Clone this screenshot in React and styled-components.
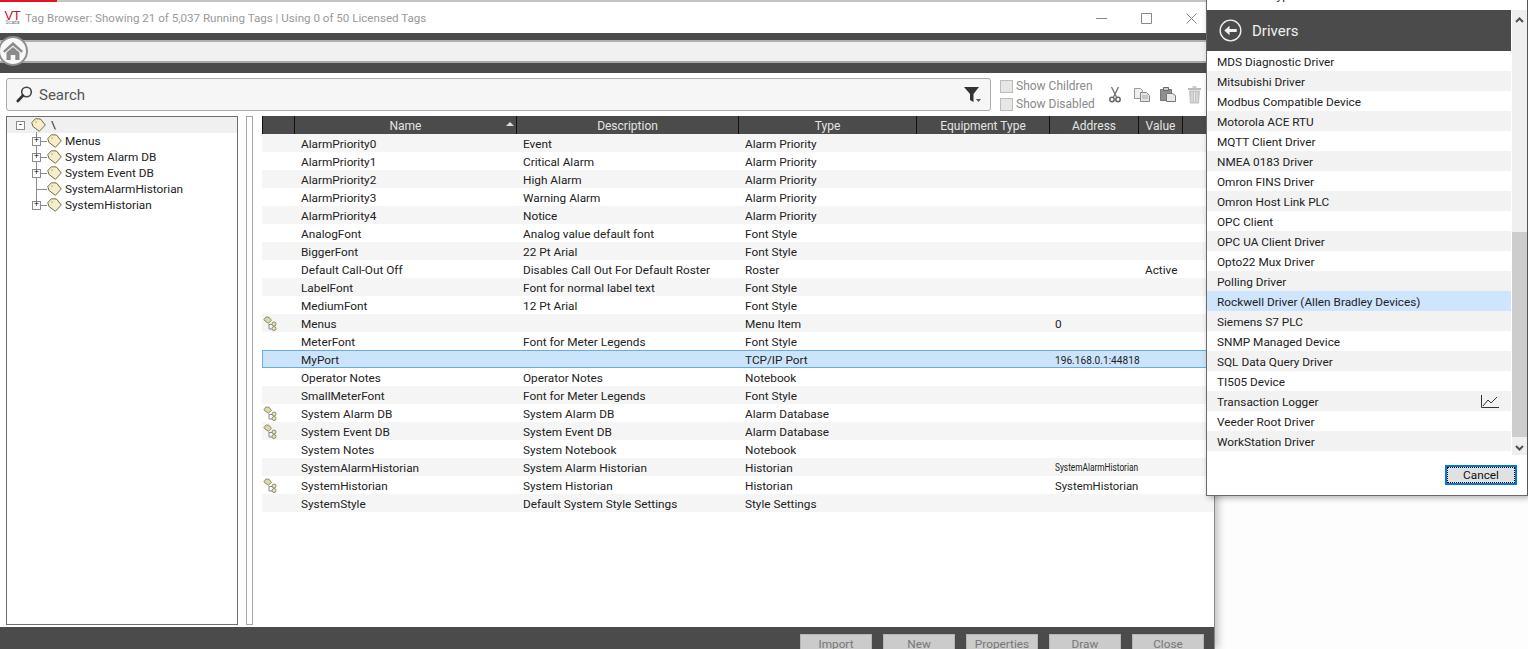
import styled, { createGlobalStyle } from 'styled-components';

const FONT = `Roboto, "Open Sans", "Liberation Sans", sans-serif`;

const tagRows = [
  { name: 'AlarmPriority0', desc: 'Event', type: 'Alarm Priority' },
  { name: 'AlarmPriority1', desc: 'Critical Alarm', type: 'Alarm Priority' },
  { name: 'AlarmPriority2', desc: 'High Alarm', type: 'Alarm Priority' },
  { name: 'AlarmPriority3', desc: 'Warning Alarm', type: 'Alarm Priority' },
  { name: 'AlarmPriority4', desc: 'Notice', type: 'Alarm Priority' },
  { name: 'AnalogFont', desc: 'Analog value default font', type: 'Font Style' },
  { name: 'BiggerFont', desc: '22 Pt Arial', type: 'Font Style' },
  { name: 'Default Call-Out Off', desc: 'Disables Call Out For Default Roster', type: 'Roster', value: 'Active' },
  { name: 'LabelFont', desc: 'Font for normal label text', type: 'Font Style' },
  { name: 'MediumFont', desc: '12 Pt Arial', type: 'Font Style' },
  { name: 'Menus', desc: '', type: 'Menu Item', address: '0', parent: true },
  { name: 'MeterFont', desc: 'Font for Meter Legends', type: 'Font Style' },
  { name: 'MyPort', desc: '', type: 'TCP/IP Port', address: '196.168.0.1:44818', fit: 0.86, selected: true },
  { name: 'Operator Notes', desc: 'Operator Notes', type: 'Notebook' },
  { name: 'SmallMeterFont', desc: 'Font for Meter Legends', type: 'Font Style' },
  { name: 'System Alarm DB', desc: 'System Alarm DB', type: 'Alarm Database', parent: true },
  { name: 'System Event DB', desc: 'System Event DB', type: 'Alarm Database', parent: true },
  { name: 'System Notes', desc: 'System Notebook', type: 'Notebook' },
  { name: 'SystemAlarmHistorian', desc: 'System Alarm Historian', type: 'Historian', address: 'SystemAlarmHistorian', fit: 0.79, small: true },
  { name: 'SystemHistorian', desc: 'System Historian', type: 'Historian', address: 'SystemHistorian', fit: 0.96, parent: true },
  { name: 'SystemStyle', desc: 'Default System Style Settings', type: 'Style Settings' },
];

const treeRows = [
  { label: 'Menus', box: true },
  { label: 'System Alarm DB', box: true },
  { label: 'System Event DB', box: true },
  { label: 'SystemAlarmHistorian', box: false },
  { label: 'SystemHistorian', box: true },
];

const drivers = [
  'MDS Diagnostic Driver',
  'Mitsubishi Driver',
  'Modbus Compatible Device',
  'Motorola ACE RTU',
  'MQTT Client Driver',
  'NMEA 0183 Driver',
  'Omron FINS Driver',
  'Omron Host Link PLC',
  'OPC Client',
  'OPC UA Client Driver',
  'Opto22 Mux Driver',
  'Polling Driver',
  'Rockwell Driver (Allen Bradley Devices)',
  'Siemens S7 PLC',
  'SNMP Managed Device',
  'SQL Data Query Driver',
  'TI505 Device',
  'Transaction Logger',
  'Veeder Root Driver',
  'WorkStation Driver',
];

const GlobalStyle = createGlobalStyle`
  html, body {
    margin: 0;
    padding: 0;
    height: 100%;
    overflow: hidden;
    background: #ffffff;
  }
  * { box-sizing: border-box; }
`;

const Page = styled.div`
  position: relative;
  width: 1528px;
  height: 649px;
  overflow: hidden;
  font-family: ${FONT};
  font-size: 11.8px;
  color: #222;
  background: #fdfdfd;
`;

const Window = styled.div`
  display: flex;
  flex-direction: column;
  width: 1215px;
  height: 649px;
  background: #fff;
  border-right: 1px solid #8a8a8a;
  box-shadow: 3px 0 8px rgba(0, 0, 0, 0.25);
`;

const TopStrip = styled.div`
  height: 3px;
  background: linear-gradient(to right, #e81123 57px, #c4c4c4 57px);
  border-bottom: 1px solid #fff;
`;

const TitleBar = styled.div`
  display: flex;
  align-items: center;
  height: 30px;
  padding-left: 4px;
`;

const Logo = styled.div`
  display: flex;
  flex-direction: column;
  align-items: center;
  width: 17px;
  line-height: 1;
  margin-right: 4px;
`;

const LogoMark = styled.span`
  color: #c8102e;
  font: 13px/9px "Liberation Sans", sans-serif;
  letter-spacing: -0.3px;
`;

const LogoSub = styled.span`
  color: #777;
  font-size: 5px;
  line-height: 5px;
`;

const TitleText = styled.div`
  flex: 1;
  color: #9a9a9a;
  font-size: 11.6px;
`;

const WinButton = styled.div`
  display: flex;
  align-items: center;
  justify-content: center;
  width: 45px;
  height: 30px;
`;

const HomeBand = styled.div`
  position: relative;
  height: 40px;
  padding: 7px 0 10px;
  background: #4b4b4b;
`;

const HomeStrip = styled.div`
  height: 23px;
  background: #f1f1f1;
  border-top: 2px solid #b0b0b0;
  border-bottom: 2px solid #a8a8a8;
`;

const HomeButton = styled.div`
  position: absolute;
  left: -2px;
  top: 3px;
  width: 30px;
  height: 30px;
  border-radius: 50%;
  background: #f7f7f7;
  border: 2px solid #8e8e8e;
  display: flex;
  align-items: center;
  justify-content: center;
`;

const SearchRow = styled.div`
  display: flex;
  align-items: flex-start;
  padding: 5px 0 0 6px;
  height: 43px;
`;

const SearchBox = styled.div`
  display: flex;
  align-items: center;
  width: 985px;
  height: 33px;
  padding: 0 9px 0 9px;
  background: #f6f6f6;
  border: 1px solid #ababab;
  border-radius: 3px;
`;

const SearchText = styled.div`
  flex: 1;
  margin-left: 6px;
  color: #555;
  font-size: 15px;
`;

const Checks = styled.div`
  display: flex;
  flex-direction: column;
  gap: 4px;
  width: 103px;
  margin: 1px 0 0 9px;
`;

const CheckRow = styled.div`
  display: flex;
  align-items: center;
  gap: 3px;
  height: 14px;
  color: #8a8a8a;
  font-size: 12px;
`;

const CheckBox = styled.span`
  width: 13px;
  height: 13px;
  background: #e6e6e6;
  border: 1px solid #bcbcbc;
`;

const ToolIcons = styled.div`
  display: flex;
  align-items: center;
  gap: 10px;
  margin: 7px 0 0 6px;

  & > svg:first-child {
    margin-right: 3px;
  }
  & > svg:last-child {
    margin-left: 1px;
  }
`;

const Main = styled.div`
  display: flex;
  height: 509px;
  padding-left: 6px;
`;

const Tree = styled.div`
  position: relative;
  width: 232px;
  border: 1px solid #6e6e6e;
`;

const TreeRoot = styled.div`
  display: flex;
  align-items: center;
  height: 16px;
  background: #f0f0f0;
  padding-left: 9px;
`;

const TreeRow = styled.div`
  position: relative;
  display: flex;
  align-items: center;
  height: 16px;
  padding-left: 25px;

  &::before {
    content: '';
    position: absolute;
    left: 29px;
    top: 8px;
    width: 11px;
    border-top: 1px solid #8c8c8c;
  }
  &::after {
    content: '';
    position: absolute;
    left: 29px;
    top: -1px;
    height: ${p => (p.$last ? '9px' : '17px')};
    border-left: 1px solid #8c8c8c;
  }
`;

const Expander = styled.span`
  position: relative;
  z-index: 1;
  display: flex;
  align-items: center;
  justify-content: center;
  width: 9px;
  height: 9px;
  background: #fff;
  border: 1px solid #8c8c8c;
  color: #000;
  font: 9px/7px "Liberation Mono", monospace;
`;

const TreeGap = styled.span`
  width: 9px;
`;

const TreeLabel = styled.span`
  margin-left: ${p => (p.$root ? '5px' : '3px')};
  color: #222;
`;

const TagWrap = styled.span`
  position: relative;
  z-index: 1;
  display: flex;
  margin-left: 6px;
`;

const Splitter = styled.div`
  width: 7px;
  margin: 0 9px 0 8px;
  border: 1px solid #a6a6a6;
  background: #fff;
`;

const Grid = styled.div`
  flex: 1;
  min-width: 0;
`;

const COLUMNS = '33px 222px 222px 178px 133px 89px 44px 1fr';

const HeadRow = styled.div`
  display: grid;
  grid-template-columns: ${COLUMNS};
  height: 18px;
  background: #4b4b4b;
`;

const HeadCell = styled.div`
  position: relative;
  display: flex;
  align-items: center;
  justify-content: center;
  padding-top: 2px;
  color: #e4e4e4;
  font-size: 12px;
  border-right: 1px solid #111;
  border-left: ${p => (p.$first ? '1px solid #111' : 'none')};

  &:last-child {
    border-right: none;
  }
`;

const SortArrow = styled.span`
  position: absolute;
  right: 2px;
  top: 6px;
  width: 0;
  height: 0;
  border-left: 4px solid transparent;
  border-right: 4px solid transparent;
  border-bottom: 4px solid #ddd;
`;

const Row = styled.div`
  display: grid;
  grid-template-columns: ${COLUMNS};
  height: 18px;
  align-items: center;
  background: ${p => (p.$selected ? '#cce4fb' : p.$odd ? '#f5f5f5' : '#fff')};
  outline: ${p => (p.$selected ? '1px solid #68ace4' : 'none')};
  outline-offset: -1px;
  white-space: nowrap;
`;

const Cell = styled.div`
  padding: 1px 0 0 6px;
  overflow: hidden;
`;

const AddressCell = styled.div`
  padding: 1px 0 0 5px;
  font-size: ${p => (p.$small ? '10.5px' : '11.8px')};
`;

const AddressText = styled.span`
  display: inline-block;
  transform-origin: left center;
  transform: scaleX(${p => p.$fit || 1});
`;

const IconCell = styled.div`
  display: flex;
  padding-left: 1px;
`;

const Footer = styled.div`
  display: flex;
  justify-content: flex-end;
  gap: 11px;
  height: 22px;
  margin-top: 2px;
  padding: 7px 10px 0 0;
  overflow: hidden;
  background: #4b4b4b;
`;

const FootButton = styled.div`
  flex: none;
  width: 72px;
  height: 22px;
  background: #cbcbcb;
  border: 1px solid #b5b5b5;
  color: #777;
  text-align: center;
  line-height: 19px;
`;

const Dialog = styled.div`
  position: absolute;
  top: 0;
  left: 1206px;
  width: 322px;
  height: 496px;
  background: #fff;
  border-left: 1px solid #6a6a6a;
  border-right: 1px solid #555;
  border-bottom: 1px solid #6a6a6a;
  box-shadow: 2px 2px 6px rgba(0, 0, 0, 0.3);
`;

const ClippedLabel = styled.div`
  height: 10px;
  overflow: hidden;
  padding-left: 63px;
  color: #222;
`;

const ClippedText = styled.div`
  margin-top: -11px;
  line-height: 14px;
`;

const DialogBody = styled.div`
  display: flex;
  height: 445px;
`;

const ListSide = styled.div`
  flex: none;
  width: 304px;
`;

const DialogHead = styled.div`
  display: flex;
  align-items: center;
  gap: 10px;
  height: 41px;
  padding-left: 12px;
  background: #4b4b4b;
  color: #f0f0f0;
  font-size: 15px;
`;

const DriverName = styled.span`
  padding-top: 1px;
`;

const DriverRow = styled.div`
  display: flex;
  align-items: center;
  justify-content: space-between;
  height: 20px;
  padding: 0 12px 0 10px;
  background: ${p => (p.$selected ? '#cee5fd' : p.$odd ? '#f2f2f2' : '#fff')};
`;

const Scrollbar = styled.div`
  flex: none;
  display: flex;
  flex-direction: column;
  align-items: center;
  width: 15px;
  margin-left: 1px;
  background: #efefef;
  padding-top: 7px;
`;

const Thumb = styled.div`
  flex: none;
  width: 100%;
  height: 205px;
  margin: 209px 0 8px;
  background: #cdcdcd;
`;

const DialogFoot = styled.div`
  display: flex;
  justify-content: flex-end;
  padding: 10px 10px 0 0;
`;

const CancelButton = styled.div`
  width: 72px;
  height: 20px;
  border: 2px solid #0078d7;
  outline: 1px dotted #000;
  outline-offset: -3px;
  background: #e1e1e1;
  text-align: center;
  line-height: 16px;
  color: #111;
`;

const TagIcon = () => (
  <svg width="15" height="14" viewBox="0 0 15 14">
    <path d="M.8 4.5 4.5.7 9.5 1l4.8 6-6 6.3-6.5-5z" fill="#f5eec8" stroke="#6f6c48" strokeWidth="1" />
    <circle cx="5" cy="4" r="0.8" fill="#a9a26a" />
  </svg>
);

const HierarchyIcon = () => (
  <svg width="15" height="15" viewBox="0 0 15 15">
    <path d="M1 3.5 3 1l3 .3 2.5 3-3 3L2 5z" fill="#dcd9a8" stroke="#8d8c68" />
    <path d="M6 8.5h3M6 8v5h3" fill="none" stroke="#888" />
    <circle cx="11" cy="8" r="2" fill="#e6e4c0" stroke="#8d8c68" />
    <circle cx="11" cy="12.5" r="2" fill="#e6e4c0" stroke="#8d8c68" />
  </svg>
);

const HomeIcon = () => (
  <svg width="22" height="20" viewBox="0 0 22 20">
    <path d="M11 1 1 10l1.6 1.8L11 4.4l8.4 7.4L21 10z" fill="#8a8a8a" />
    <path d="M4.5 11.5 11 6l6.5 5.5V19h-4.2v-5H8.7v5H4.5z" fill="#8a8a8a" />
  </svg>
);

const SearchIcon = () => (
  <svg width="17" height="17" viewBox="0 0 17 17">
    <circle cx="10.5" cy="6" r="4.8" fill="none" stroke="#444" strokeWidth="1.6" />
    <path d="M7 9.5 1.8 15" stroke="#333" strokeWidth="2.6" strokeLinecap="round" />
  </svg>
);

const FilterIcon = () => (
  <svg width="17" height="17" viewBox="0 0 17 17">
    <path d="M0 1h15L9.5 8v8l-3.5-2V8z" fill="#333" />
    <path d="M12 13h5l-2.5 3z" fill="#555" />
  </svg>
);

const ScissorsIcon = () => (
  <svg width="12" height="16" viewBox="0 0 12 16">
    <path d="M2.5 0 7.5 10M9.5 0 4.5 10" stroke="#777" strokeWidth="1.4" />
    <circle cx="3" cy="12.5" r="2.2" fill="none" stroke="#666" strokeWidth="1.5" />
    <circle cx="9" cy="12.5" r="2.2" fill="none" stroke="#666" strokeWidth="1.5" />
  </svg>
);

const CopyIcon = () => (
  <svg width="16" height="14" viewBox="0 0 16 14">
    <path d="M.5.5h6l2 2v8H.5z" fill="#eee" stroke="#999" />
    <path d="M6.5 4.5h6l3 3v6h-9z" fill="#e4e4e4" stroke="#888" />
    <path d="M8 8h6M8 10h6" stroke="#aaa" />
  </svg>
);

const PasteIcon = () => (
  <svg width="16" height="15" viewBox="0 0 16 15">
    <path d="M.5 2.5h11v11H.5z" fill="#8f8f8f" stroke="#777" />
    <path d="M3.5.5h5v3h-5z" fill="#ccc" stroke="#666" />
    <path d="M6.5 6.5h6l3 2v6h-9z" fill="#e8e8e8" stroke="#777" />
  </svg>
);

const TrashIcon = () => (
  <svg width="15" height="19" viewBox="0 0 15 19">
    <path d="M1 3h13v2H1z" fill="#bbb" />
    <path d="M5.5 1h4v2h-4z" fill="#ccc" />
    <path d="M2 5.5h11l-1 13H3z" fill="#c4c4c4" />
    <path d="M5 7v10M7.5 7v10M10 7v10" stroke="#e8e8e8" />
  </svg>
);

const BackIcon = () => (
  <svg width="23" height="23" viewBox="0 0 24 24">
    <circle cx="12" cy="12" r="10.8" fill="none" stroke="#f0f0f0" strokeWidth="1.4" />
    <path d="M5.5 12 11 7v3.4h7.5v3.2H11V17z" fill="#f0f0f0" />
  </svg>
);

const Chevron = ({ down }) => (
  <svg width="9" height="6" viewBox="0 0 9 6" style={{ flex: 'none' }}>
    <path d={down ? 'M1 1l3.5 3.5L8 1' : 'M1 5l3.5-3.5L8 5'} fill="none" stroke="#505050" strokeWidth="2" />
  </svg>
);

const ChartIcon = () => (
  <svg width="18" height="13" viewBox="0 0 18 13">
    <path d="M.5 0v12.5H18" fill="none" stroke="#333" />
    <path d="M2 11l5-6 3 3 6-6" fill="none" stroke="#333" />
  </svg>
);

const App = () => {
  return (
    <Page>
      <GlobalStyle />
      <Window>
        <TopStrip />
        <TitleBar>
          <Logo>
            <LogoMark>VT</LogoMark>
            <LogoSub>Scada</LogoSub>
          </Logo>
          <TitleText>Tag Browser: Showing 21 of 5,037 Running Tags | Using 0 of 50 Licensed Tags</TitleText>
          <WinButton>
            <svg width="11" height="11" viewBox="0 0 11 11">
              <path d="M0 5.5h11" stroke="#888" />
            </svg>
          </WinButton>
          <WinButton>
            <svg width="11" height="11" viewBox="0 0 11 11">
              <path d="M.5.5h10v10H.5z" fill="none" stroke="#888" />
            </svg>
          </WinButton>
          <WinButton>
            <svg width="11" height="11" viewBox="0 0 11 11">
              <path d="M.5.5l10 10M10.5.5l-10 10" stroke="#888" />
            </svg>
          </WinButton>
        </TitleBar>
        <HomeBand>
          <HomeStrip />
          <HomeButton>
            <HomeIcon />
          </HomeButton>
        </HomeBand>
        <SearchRow>
          <SearchBox>
            <SearchIcon />
            <SearchText>Search</SearchText>
            <FilterIcon />
          </SearchBox>
          <Checks>
            <CheckRow>
              <CheckBox />
              Show Children
            </CheckRow>
            <CheckRow>
              <CheckBox />
              Show Disabled
            </CheckRow>
          </Checks>
          <ToolIcons>
            <ScissorsIcon />
            <CopyIcon />
            <PasteIcon />
            <TrashIcon />
          </ToolIcons>
        </SearchRow>
        <Main>
          <Tree>
            <TreeRoot>
              <Expander>-</Expander>
              <TagWrap>
                <TagIcon />
              </TagWrap>
              <TreeLabel $root>\</TreeLabel>
            </TreeRoot>
            {treeRows.map((row, idx) => (
              <TreeRow key={row.label} $last={idx === treeRows.length - 1}>
                {row.box ? <Expander>+</Expander> : <TreeGap />}
                <TagWrap>
                  <TagIcon />
                </TagWrap>
                <TreeLabel>{row.label}</TreeLabel>
              </TreeRow>
            ))}
          </Tree>
          <Splitter />
          <Grid>
            <HeadRow>
              <HeadCell $first />
              <HeadCell>
                Name
                <SortArrow />
              </HeadCell>
              <HeadCell>Description</HeadCell>
              <HeadCell>Type</HeadCell>
              <HeadCell>Equipment Type</HeadCell>
              <HeadCell>Address</HeadCell>
              <HeadCell>Value</HeadCell>
              <HeadCell />
            </HeadRow>
            {tagRows.map((row, idx) => (
              <Row key={row.name} $odd={idx % 2 === 0} $selected={row.selected}>
                <IconCell>{row.parent && <HierarchyIcon />}</IconCell>
                <Cell>{row.name}</Cell>
                <Cell>{row.desc}</Cell>
                <Cell>{row.type}</Cell>
                <Cell />
                <AddressCell $small={row.small}>
                  <AddressText $fit={row.fit}>{row.address}</AddressText>
                </AddressCell>
                <Cell>{row.value}</Cell>
                <Cell />
              </Row>
            ))}
          </Grid>
        </Main>
        <Footer>
          <FootButton>Import</FootButton>
          <FootButton>New</FootButton>
          <FootButton>Properties</FootButton>
          <FootButton>Draw</FootButton>
          <FootButton>Close</FootButton>
        </Footer>
      </Window>
      <Dialog>
        <ClippedLabel>
          <ClippedText>Type</ClippedText>
        </ClippedLabel>
        <DialogBody>
          <ListSide>
            <DialogHead>
              <BackIcon />
              <DriverName>Drivers</DriverName>
            </DialogHead>
            {drivers.map((driver, idx) => (
              <DriverRow key={driver} $odd={idx % 2 === 1} $selected={driver.startsWith('Rockwell')}>
                <DriverName>{driver}</DriverName>
                {driver === 'Transaction Logger' && <ChartIcon />}
              </DriverRow>
            ))}
          </ListSide>
          <Scrollbar>
            <Chevron />
            <Thumb />
            <Chevron down />
          </Scrollbar>
        </DialogBody>
        <DialogFoot>
          <CancelButton>Cancel</CancelButton>
        </DialogFoot>
      </Dialog>
    </Page>
  );
};

export default App;
